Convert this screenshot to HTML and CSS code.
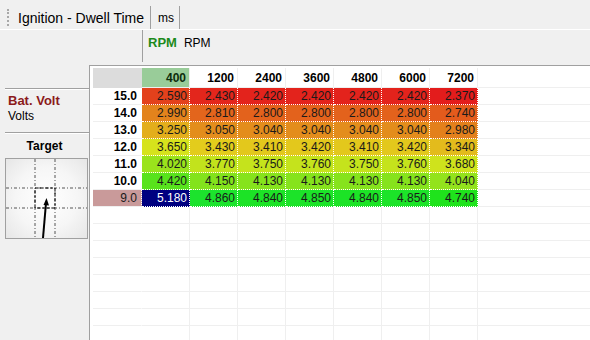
FILE: index.html
```html
<!DOCTYPE html>
<html lang="en">
<head>
    <meta charset="UTF-8">
    <title>Ignition - Dwell Time</title>
    <link rel="stylesheet" href="styles.css">
</head>
<body>

<!-- Tabeli tööriistariba -->
<div class="toolbar">
    <div class="grip"></div>
    <div class="tbItem tbTitle">Ignition - Dwell Time</div>
    <div class="tbItem tbUnit">ms</div>
</div>

<!-- X telje nimi -->
<div class="axisBar">
    <div class="axisLabel"><span class="axisName">RPM</span><span class="axisUnit">RPM</span></div>
</div>

<div class="main">
    <div class="side">
        <div class="sideTop"></div>
        <div class="sep"></div>
        <div class="yAxis">
            <div class="yName">Bat. Volt</div>
            <div class="yUnit">Volts</div>
        </div>
        <div class="sep"></div>
        <div class="targetTitle">Target</div>
        <div class="targetBox">
            <svg width="81" height="79" viewBox="0 0 81 79">
                <line x1="29" y1="0" x2="29" y2="79" class="dash"/>
                <line x1="49" y1="0" x2="49" y2="79" class="dash"/>
                <line x1="0" y1="29" x2="81" y2="29" class="dash"/>
                <line x1="0" y1="49" x2="81" y2="49" class="dash"/>
                <rect x="29" y="29" width="20" height="20" class="centre"/>
                <line x1="37" y1="79" x2="40" y2="44" class="arrow"/>
                <polygon points="40.5,39 37.5,46 43,46.5" fill="#000"/>
            </svg>
        </div>
    </div>

    <div class="gridWrap">
        <div id="mapGrid" class="mapGrid"></div>
    </div>
</div>

<script>
    const veerud = [400, 1200, 2400, 3600, 4800, 6000, 7200];
    const read = [
        [15.0, [2.590, 2.430, 2.420, 2.420, 2.420, 2.420, 2.370]],
        [14.0, [2.990, 2.810, 2.800, 2.800, 2.800, 2.800, 2.740]],
        [13.0, [3.250, 3.050, 3.040, 3.040, 3.040, 3.040, 2.980]],
        [12.0, [3.650, 3.430, 3.410, 3.420, 3.410, 3.420, 3.340]],
        [11.0, [4.020, 3.770, 3.750, 3.760, 3.750, 3.760, 3.680]],
        [10.0, [4.420, 4.150, 4.130, 4.130, 4.130, 4.130, 4.040]],
        [9.0, [5.180, 4.860, 4.840, 4.850, 4.840, 4.850, 4.740]]
    ];

    // väärtus -> värv (punane .. roheline)
    function varv(v) {
        const hue = Math.max(0, Math.min(125, (v - 2.37) * 50));
        return 'hsl(' + hue.toFixed(0) + ', 78%, 50%)';
    }

    const grid = document.getElementById('mapGrid');

    function lahter(cls, text, style) {
        const el = document.createElement('div');
        el.className = 'cell ' + cls;
        el.textContent = text;
        if (style) el.setAttribute('style', style);
        grid.appendChild(el);
    }

    // päise rida
    lahter('corner', '');
    veerud.forEach((c, i) => lahter(i === 0 ? 'colHead colSel' : 'colHead', c));
    lahter('filler head', '');

    // andmete read
    read.forEach((r, ri) => {
        const last = ri === read.length - 1;
        lahter(last ? 'rowHead rowSel' : 'rowHead', r[0].toFixed(1));
        r[1].forEach((v, ci) => {
            if (last && ci === 0) {
                lahter('data active', v.toFixed(3));
            } else {
                lahter('data', v.toFixed(3), 'background-color: ' + varv(v));
            }
        });
        lahter('filler', '');
    });

    // tühjad read
    for (let i = 0; i < 8; i++) {
        lahter('rowHead', '');
        veerud.forEach(() => lahter('empty', ''));
        lahter('filler', '');
    }
</script>

</body>
</html>
```

FILE: styles.css
```css
body {
    margin: 0;
    width: 590px;
    height: 340px;
    overflow: hidden;
    background-color: #f0f0f0;
    font-family: "Liberation Sans", Arial, sans-serif;
    color: #000;
}

.toolbar {
    height: 29px;
    display: flex;
    background-color: #f0f0f0;
    border-bottom: 1px solid #fff;
}

.grip {
    width: 0;
    margin: 9px 9px 3px 7px;
    border-left: 2px dotted #a8a8a8;
}

.tbItem {
    display: flex;
    align-items: center;
    margin-top: 6px;
    border-right: 1px solid #a0a0a0;
}

.tbTitle {
    font-size: 14px;
    padding-right: 6px;
}

.tbUnit {
    font-size: 12px;
    padding: 0 5px 0 7px;
}

.axisBar {
    height: 35px;
    padding-left: 142px;
    display: flex;
}

.axisLabel {
    margin-bottom: 3px;
    border-left: 1px solid #a0a0a0;
    padding: 5px 0 0 5px;
    display: flex;
    align-items: baseline;
    gap: 7px;
}

.axisName {
    font-size: 13px;
    font-weight: bold;
    color: #1c8a1c;
}

.axisUnit {
    font-size: 12px;
}

.main {
    display: flex;
}

.side {
    width: 89px;
    flex-shrink: 0;
}

.sideTop {
    height: 23px;
}

.sep {
    margin-left: 5px;
    border-top: 1px solid #a0a0a0;
    border-bottom: 1px solid #fff;
}

.yAxis {
    height: 42px;
    padding: 3px 0 0 8px;
    box-sizing: border-box;
}

.yName {
    font-size: 13px;
    font-weight: bold;
    color: #8b1a1a;
    line-height: 15px;
}

.yUnit {
    font-size: 12px;
    line-height: 15px;
    margin-top: 1px;
}

.targetTitle {
    height: 24px;
    line-height: 24px;
    text-align: center;
    font-size: 12px;
    font-weight: bold;
}

.targetBox {
    margin-left: 5px;
    width: 83px;
    height: 81px;
    box-sizing: border-box;
    border: 1px solid #a0a0a0;
    background: radial-gradient(circle, #ffffff 0%, #f6f6f6 55%, #e6e6e6 100%);
}

.targetBox svg {
    display: block;
}

.dash {
    stroke: #555;
    stroke-width: 1;
    stroke-dasharray: 3 2 1 2;
}

.centre {
    fill: none;
    stroke: #000;
    stroke-width: 1;
    stroke-dasharray: 3 2;
}

.arrow {
    stroke: #000;
    stroke-width: 2;
}

.gridWrap {
    flex: 1;
    height: 275px;
    border-left: 1px solid #a0a0a0;
    border-top: 1px solid #a0a0a0;
    background-color: #fff;
    padding: 2px 0 0 3px;
    overflow: hidden;
}

.mapGrid {
    display: grid;
    grid-template-columns: 49px repeat(7, 48px) 1fr;
    grid-template-rows: 20px;
    grid-auto-rows: 17px;
}

.cell {
    box-sizing: border-box;
    border-right: 1px solid #efefef;
    border-bottom: 1px solid #efefef;
    font-size: 12px;
    line-height: 16px;
    text-align: right;
    padding-right: 2px;
    white-space: nowrap;
}

.corner {
    background-color: #dcdcdc;
    border-color: #dcdcdc;
}

.colHead {
    font-weight: bold;
    line-height: 21px;
    padding-right: 3px;
}

.colSel {
    background-color: #99cc99;
    color: #0c2c0c;
}

.rowHead {
    font-weight: bold;
    padding-right: 4px;
    border-right: 1px dotted #fff;
}

.rowSel {
    background-color: #c99a9a;
    font-weight: normal;
    color: #1a1a1a;
}

.data {
    color: #1a1a1a;
    border-right: 1px dotted #fff;
    border-bottom: 1px dotted #fff;
}

.active {
    background-color: #000080;
    color: #fff;
}

.filler {
    border-right: none;
}
```
